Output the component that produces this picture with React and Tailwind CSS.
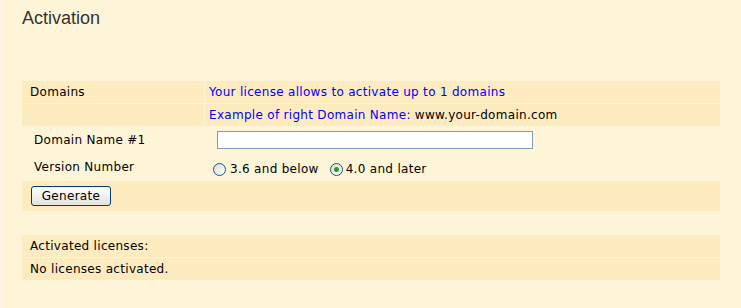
import React, { useState } from "react";

const Radio = ({ checked }) => (
  <span className="inline-flex items-center justify-center w-[13px] h-[13px] rounded-full border border-[#1c5180] bg-gradient-to-br from-[#dcdcd6] to-white shrink-0">
    {checked && <span className="w-[5px] h-[5px] rounded-full bg-[#21a121]" />}
  </span>
);

const App = () => {
  const [version, setVersion] = useState("4.0");
  const [domain, setDomain] = useState("");

  return (
    <div className="w-[741px] h-[308px] bg-[#fef5d9] border-l-2 border-[#fff9ea] text-[12px] leading-[14px] tracking-[0.3px] text-black font-['DejaVu_Sans',sans-serif] overflow-hidden">
      <h1 className="pl-[20px] pt-[7px] h-[81px] text-[18px] leading-[22px] tracking-normal text-[#333] font-['Liberation_Sans',Arial,sans-serif]">
        Activation
      </h1>

      <div className="ml-[20px] w-[698px] flex flex-col">
        <div className="flex h-[22px] gap-px">
          <div className="w-[182px] bg-[#ffebc0] pl-[8px] flex items-center">Domains</div>
          <div className="flex-1 bg-[#ffebc0] pl-[4px] flex items-center text-[#0000ff]">
            Your license allows to activate up to 1 domains
          </div>
        </div>
        <div className="flex h-[22px] gap-px mt-px">
          <div className="w-[182px] bg-[#ffebc0]" />
          <div className="flex-1 bg-[#ffebc0] pl-[4px] flex items-center">
            <span className="text-[#0000ff]">Example of right Domain Name:</span>
            <span className="ml-[4px]">www.your-domain.com</span>
          </div>
        </div>

        <div className="flex h-[24px] items-start">
          <div className="w-[183px] pl-[12px] pt-[7px]">Domain Name #1</div>
          <input
            value={domain}
            onChange={(e) => setDomain(e.target.value)}
            className="ml-[12px] w-[316px] h-[18px] mt-[5px] border border-[#7f9db9] bg-white outline-none px-1 text-[12px]"
          />
        </div>

        <div className="flex h-[31px] items-start">
          <div className="w-[183px] pl-[12px] pt-[10px]">Version Number</div>
          <div className="flex items-center ml-[8px] pt-[12px]">
            <label className="flex items-center cursor-pointer" onClick={() => setVersion("3.6")}>
              <Radio checked={version === "3.6"} />
              <span className="ml-[4px]">3.6 and below</span>
            </label>
            <label className="flex items-center ml-[11px] cursor-pointer" onClick={() => setVersion("4.0")}>
              <Radio checked={version === "4.0"} />
              <span className="ml-[3px]">4.0 and later</span>
            </label>
          </div>
        </div>

        <div className="h-[30px] bg-[#ffebc0] flex items-center pl-[9px]">
          <button className="w-[80px] h-[20px] rounded-[3px] border border-[#003c74] bg-gradient-to-b from-white to-[#e4e3dc] text-[12px] leading-none tracking-[0.3px]">
            Generate
          </button>
        </div>

        <div className="h-[24px]" />

        <div className="h-[22px] bg-[#ffebc0] pl-[8px] flex items-center">Activated licenses:</div>
        <div className="h-[22px] mt-px bg-[#ffebc0] pl-[8px] flex items-center">No licenses activated.</div>
      </div>
    </div>
  );
};

export default App;
